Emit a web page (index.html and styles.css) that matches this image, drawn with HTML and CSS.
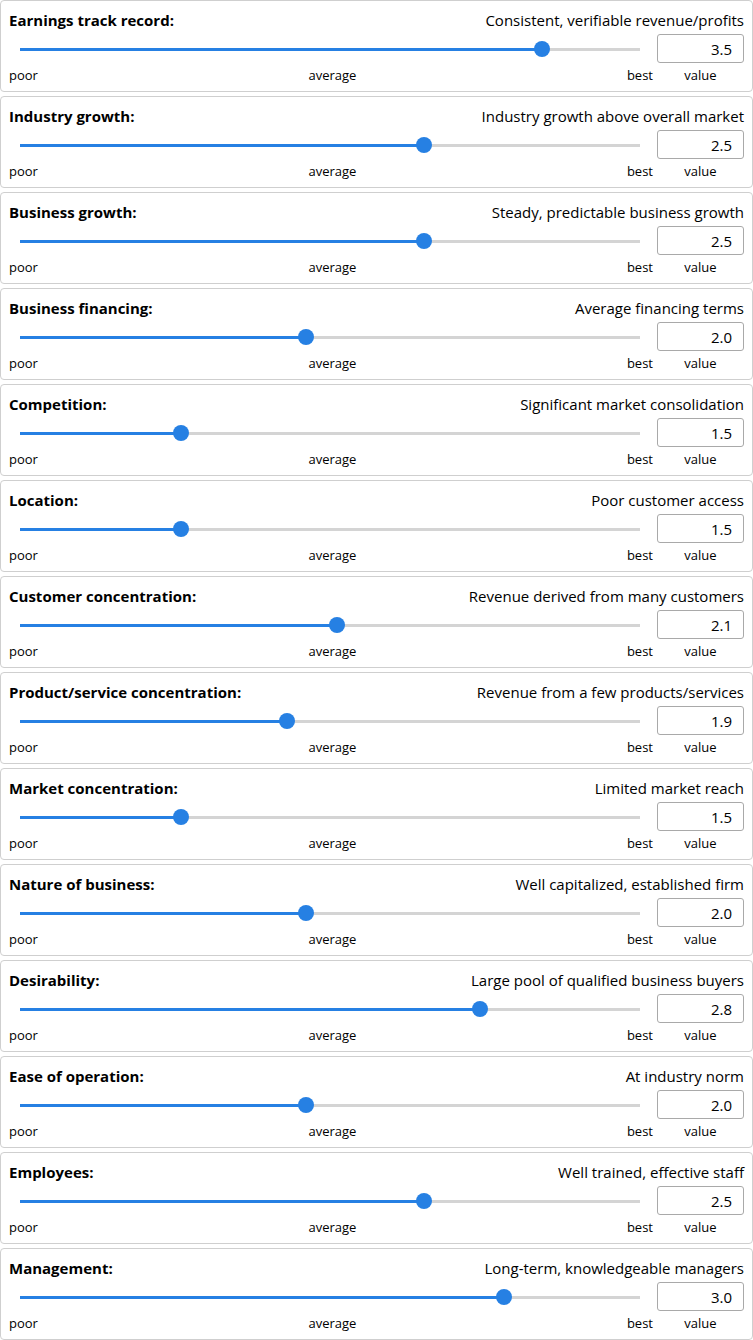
FILE: index.html
```html
<!DOCTYPE html>
<html lang="en">
<head>
    <meta charset="UTF-8">
    <meta name="viewport" content="width=device-width, initial-scale=1.0">
    <title>Business Valuation Factors</title>
    <link rel="stylesheet" href="styles.css">
</head>
<body>
    <div class="factors">
        <div class="factor">
            <div class="factor-head">
                <span class="factor-name">Earnings track record:</span>
                <span class="factor-desc">Consistent, verifiable revenue/profits</span>
            </div>
            <div class="factor-row">
                <div class="track" style="--pos: 84.19%"><div class="fill"></div><div class="thumb"></div></div>
                <input class="value-box" type="text" value="3.5">
            </div>
            <div class="factor-row labels">
                <div class="scale"><span>poor</span><span>average</span><span>best</span></div>
                <span class="value-label">value</span>
            </div>
        </div>

        <div class="factor">
            <div class="factor-head">
                <span class="factor-name">Industry growth:</span>
                <span class="factor-desc">Industry growth above overall market</span>
            </div>
            <div class="factor-row">
                <div class="track" style="--pos: 65.16%"><div class="fill"></div><div class="thumb"></div></div>
                <input class="value-box" type="text" value="2.5">
            </div>
            <div class="factor-row labels">
                <div class="scale"><span>poor</span><span>average</span><span>best</span></div>
                <span class="value-label">value</span>
            </div>
        </div>

        <div class="factor">
            <div class="factor-head">
                <span class="factor-name">Business growth:</span>
                <span class="factor-desc">Steady, predictable business growth</span>
            </div>
            <div class="factor-row">
                <div class="track" style="--pos: 65.16%"><div class="fill"></div><div class="thumb"></div></div>
                <input class="value-box" type="text" value="2.5">
            </div>
            <div class="factor-row labels">
                <div class="scale"><span>poor</span><span>average</span><span>best</span></div>
                <span class="value-label">value</span>
            </div>
        </div>

        <div class="factor">
            <div class="factor-head">
                <span class="factor-name">Business financing:</span>
                <span class="factor-desc">Average financing terms</span>
            </div>
            <div class="factor-row">
                <div class="track" style="--pos: 46.13%"><div class="fill"></div><div class="thumb"></div></div>
                <input class="value-box" type="text" value="2.0">
            </div>
            <div class="factor-row labels">
                <div class="scale"><span>poor</span><span>average</span><span>best</span></div>
                <span class="value-label">value</span>
            </div>
        </div>

        <div class="factor">
            <div class="factor-head">
                <span class="factor-name">Competition:</span>
                <span class="factor-desc">Significant market consolidation</span>
            </div>
            <div class="factor-row">
                <div class="track" style="--pos: 25.97%"><div class="fill"></div><div class="thumb"></div></div>
                <input class="value-box" type="text" value="1.5">
            </div>
            <div class="factor-row labels">
                <div class="scale"><span>poor</span><span>average</span><span>best</span></div>
                <span class="value-label">value</span>
            </div>
        </div>

        <div class="factor">
            <div class="factor-head">
                <span class="factor-name">Location:</span>
                <span class="factor-desc">Poor customer access</span>
            </div>
            <div class="factor-row">
                <div class="track" style="--pos: 25.97%"><div class="fill"></div><div class="thumb"></div></div>
                <input class="value-box" type="text" value="1.5">
            </div>
            <div class="factor-row labels">
                <div class="scale"><span>poor</span><span>average</span><span>best</span></div>
                <span class="value-label">value</span>
            </div>
        </div>

        <div class="factor">
            <div class="factor-head">
                <span class="factor-name">Customer concentration:</span>
                <span class="factor-desc">Revenue derived from many customers</span>
            </div>
            <div class="factor-row">
                <div class="track" style="--pos: 51.13%"><div class="fill"></div><div class="thumb"></div></div>
                <input class="value-box" type="text" value="2.1">
            </div>
            <div class="factor-row labels">
                <div class="scale"><span>poor</span><span>average</span><span>best</span></div>
                <span class="value-label">value</span>
            </div>
        </div>

        <div class="factor">
            <div class="factor-head">
                <span class="factor-name">Product/service concentration:</span>
                <span class="factor-desc">Revenue from a few products/services</span>
            </div>
            <div class="factor-row">
                <div class="track" style="--pos: 43.06%"><div class="fill"></div><div class="thumb"></div></div>
                <input class="value-box" type="text" value="1.9">
            </div>
            <div class="factor-row labels">
                <div class="scale"><span>poor</span><span>average</span><span>best</span></div>
                <span class="value-label">value</span>
            </div>
        </div>

        <div class="factor">
            <div class="factor-head">
                <span class="factor-name">Market concentration:</span>
                <span class="factor-desc">Limited market reach</span>
            </div>
            <div class="factor-row">
                <div class="track" style="--pos: 25.97%"><div class="fill"></div><div class="thumb"></div></div>
                <input class="value-box" type="text" value="1.5">
            </div>
            <div class="factor-row labels">
                <div class="scale"><span>poor</span><span>average</span><span>best</span></div>
                <span class="value-label">value</span>
            </div>
        </div>

        <div class="factor">
            <div class="factor-head">
                <span class="factor-name">Nature of business:</span>
                <span class="factor-desc">Well capitalized, established firm</span>
            </div>
            <div class="factor-row">
                <div class="track" style="--pos: 46.13%"><div class="fill"></div><div class="thumb"></div></div>
                <input class="value-box" type="text" value="2.0">
            </div>
            <div class="factor-row labels">
                <div class="scale"><span>poor</span><span>average</span><span>best</span></div>
                <span class="value-label">value</span>
            </div>
        </div>

        <div class="factor">
            <div class="factor-head">
                <span class="factor-name">Desirability:</span>
                <span class="factor-desc">Large pool of qualified business buyers</span>
            </div>
            <div class="factor-row">
                <div class="track" style="--pos: 74.19%"><div class="fill"></div><div class="thumb"></div></div>
                <input class="value-box" type="text" value="2.8">
            </div>
            <div class="factor-row labels">
                <div class="scale"><span>poor</span><span>average</span><span>best</span></div>
                <span class="value-label">value</span>
            </div>
        </div>

        <div class="factor">
            <div class="factor-head">
                <span class="factor-name">Ease of operation:</span>
                <span class="factor-desc">At industry norm</span>
            </div>
            <div class="factor-row">
                <div class="track" style="--pos: 46.13%"><div class="fill"></div><div class="thumb"></div></div>
                <input class="value-box" type="text" value="2.0">
            </div>
            <div class="factor-row labels">
                <div class="scale"><span>poor</span><span>average</span><span>best</span></div>
                <span class="value-label">value</span>
            </div>
        </div>

        <div class="factor">
            <div class="factor-head">
                <span class="factor-name">Employees:</span>
                <span class="factor-desc">Well trained, effective staff</span>
            </div>
            <div class="factor-row">
                <div class="track" style="--pos: 65.16%"><div class="fill"></div><div class="thumb"></div></div>
                <input class="value-box" type="text" value="2.5">
            </div>
            <div class="factor-row labels">
                <div class="scale"><span>poor</span><span>average</span><span>best</span></div>
                <span class="value-label">value</span>
            </div>
        </div>

        <div class="factor">
            <div class="factor-head">
                <span class="factor-name">Management:</span>
                <span class="factor-desc">Long-term, knowledgeable managers</span>
            </div>
            <div class="factor-row">
                <div class="track" style="--pos: 78.06%"><div class="fill"></div><div class="thumb"></div></div>
                <input class="value-box" type="text" value="3.0">
            </div>
            <div class="factor-row labels">
                <div class="scale"><span>poor</span><span>average</span><span>best</span></div>
                <span class="value-label">value</span>
            </div>
        </div>
    </div>
</body>
</html>
```

FILE: styles.css
```css
:root {
    --accent: #2680e3;
    --track: #d4d4d4;
    --border: #cfcfcf;
}

* {
    margin: 0;
    padding: 0;
    box-sizing: border-box;
}

body {
    font-family: 'Open Sans', 'Noto Sans', sans-serif;
    color: #000;
    background: white;
}

.factors {
    display: flex;
    flex-direction: column;
    gap: 4px;
}

.factor {
    height: 92px;
    border: 1px solid var(--border);
    border-radius: 4px;
    padding: 9px 8px 0 8px;
}

.factor-head {
    display: flex;
    justify-content: space-between;
    align-items: baseline;
    font-size: 15px;
    line-height: 20px;
}

.factor-name {
    font-weight: bold;
}

.factor-row {
    display: grid;
    grid-template-columns: 644px 87px;
    column-gap: 4px;
    align-items: center;
}

.factor-head + .factor-row {
    margin-top: 4px;
}

.track {
    position: relative;
    height: 3px;
    margin: 1px 13px 0 11px;
    background: var(--track);
}

.fill {
    position: absolute;
    left: 0;
    top: 0;
    bottom: 0;
    width: var(--pos);
    background: var(--accent);
}

.thumb {
    position: absolute;
    left: var(--pos);
    top: 50%;
    width: 16px;
    height: 16px;
    border-radius: 50%;
    background: var(--accent);
    transform: translate(-50%, -50%);
}

.value-box {
    height: 29px;
    width: 87px;
    border: 1px solid #a9a9a9;
    border-radius: 3px;
    padding: 0 11px;
    font-family: inherit;
    font-size: 15px;
    text-align: right;
    color: #000;
    background: white;
}

.labels {
    margin-top: 4px;
    font-size: 13px;
    line-height: 17px;
}

.scale {
    display: flex;
    justify-content: space-between;
}

.value-label {
    text-align: center;
}
```
